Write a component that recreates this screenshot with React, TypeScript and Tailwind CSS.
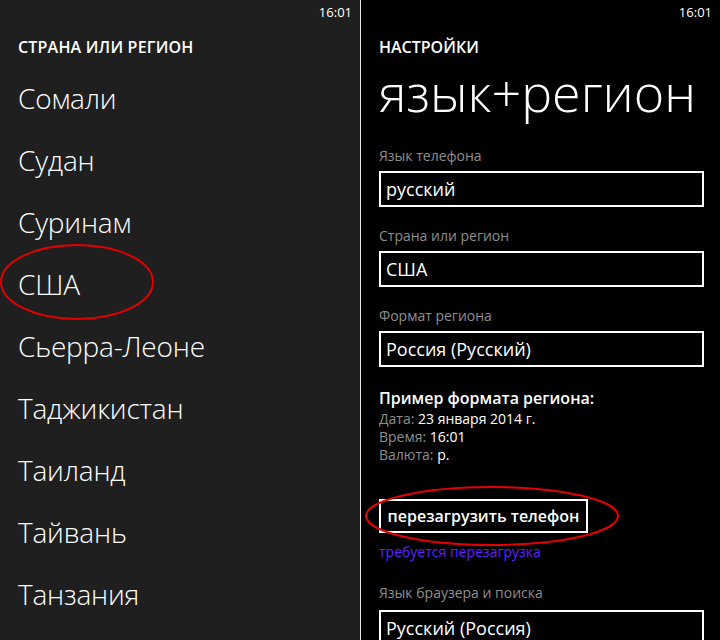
const countries = [
  'Сомали',
  'Судан',
  'Суринам',
  'США',
  'Сьерра-Леоне',
  'Таджикистан',
  'Таиланд',
  'Тайвань',
  'Танзания',
];

const font = { fontFamily: '"Open Sans", "Noto Sans", sans-serif' };

const Field = ({ label, value, first }: { label: string; value: string; first?: boolean }) => (
  <div className={first ? 'mt-[24px]' : 'mt-[19px]'}>
    <div className="text-[14px] leading-[20px] text-[#8e8e8e]">{label}</div>
    <div className="mt-[5px] h-[36px] border-2 border-white flex items-center px-[5px] text-[18px] text-white">
      {value}
    </div>
  </div>
);

export default function App() {
  return (
    <div className="relative flex h-[640px] w-[720px] overflow-hidden bg-black text-white" style={font}>
      {/* left: country picker */}
      <div className="w-[360px] shrink-0 bg-[#1f1f1f] pl-[18px]">
        <div className="h-[24px] pr-[8px] text-right text-[13px] leading-[24px]">16:01</div>
        <div className="mt-[12px] text-[16px] font-semibold leading-[22px] tracking-[0.2px]">СТРАНА ИЛИ РЕГИОН</div>
        <ul className="mt-[9px]">
          {countries.map((c) => (
            <li key={c} className="text-[28px] font-light leading-[62px] tracking-[-0.2px]">
              {c}
            </li>
          ))}
        </ul>
      </div>

      <div className="w-[1px] shrink-0 bg-[#e8e8e8]" />

      {/* right: settings */}
      <div className="flex-1 pl-[18px] pr-[16px]">
        <div className="h-[24px] -mr-[8px] text-right text-[13px] leading-[24px]">16:01</div>
        <div className="mt-[12px] text-[16px] font-semibold leading-[22px]">НАСТРОЙКИ</div>
        <div className="mt-[4px] text-[52px] font-light leading-[60px]">язык+регион</div>

        <Field first label="Язык телефона" value="русский" />
        <Field label="Страна или регион" value="США" />
        <Field label="Формат региона" value="Россия (Русский)" />

        <div className="mt-[21px] text-[16px] font-semibold leading-[20px]">Пример формата региона:</div>
        <div className="mt-[2px] text-[14px] leading-[18px]">
          <div>
            <span className="text-[#8e8e8e]">Дата: </span>23 января 2014 г.
          </div>
          <div>
            <span className="text-[#8e8e8e]">Время: </span>16:01
          </div>
          <div>
            <span className="text-[#8e8e8e]">Валюта: </span>р.
          </div>
        </div>

        <div className="mt-[35px] inline-flex h-[34px] w-[209px] items-center justify-center border-2 border-white text-[16px] font-semibold">
          перезагрузить телефон
        </div>
        <div className="mt-[9px] text-[14px] leading-[20px] text-[#6220ff]">требуется перезагрузка</div>

        <div className="mt-[21px] text-[14px] leading-[20px] text-[#8e8e8e]">Язык браузера и поиска</div>
        <div className="mt-[7px] h-[36px] border-2 border-white flex items-center px-[5px] text-[18px]">
          Русский (Россия)
        </div>
      </div>

      {/* red annotation marks */}
      <svg className="pointer-events-none absolute left-0 top-0" width="720" height="640">
        <ellipse cx="77" cy="282" rx="76" ry="37" fill="none" stroke="#e30000" strokeWidth="2" />
        <ellipse cx="492" cy="516" rx="126" ry="29" fill="none" stroke="#e30000" strokeWidth="2" />
      </svg>
    </div>
  );
}
